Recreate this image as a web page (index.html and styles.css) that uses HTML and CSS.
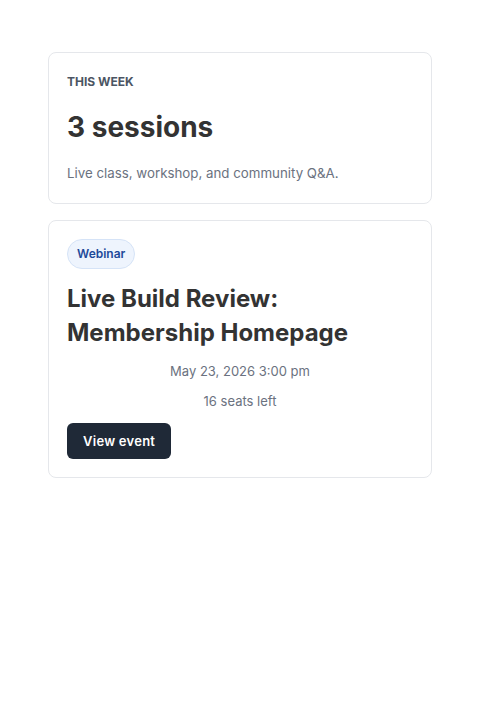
FILE: index.html
```html
<!DOCTYPE html>
<html lang="en">
<head>
<meta charset="UTF-8">
<meta name="viewport" content="width=device-width, initial-scale=1.0">
<title>This week</title>
<link rel="stylesheet" href="styles.css">
</head>
<body>

<div class="content">
    <section class="card summary">
        <div class="eyebrow">THIS WEEK</div>
        <h2 class="count">3 sessions</h2>
        <p class="summary-text">Live class, workshop, and community Q&amp;A.</p>
    </section>

    <section class="card event">
        <span class="badge">Webinar</span>
        <h3 class="event-title">Live Build Review: Membership Homepage</h3>
        <div class="event-meta">
            <div class="event-date">May 23, 2026 3:00 pm</div>
            <div class="event-seats">16 seats left</div>
        </div>
        <button class="btn">View event</button>
    </section>
</div>

</body>
</html>
```

FILE: styles.css
```css
body {
    margin: 0;
    background-color: #fff;
    color: #333;
    font-family: Inter, "Noto Sans", sans-serif;
}
.content {
    width: 384px;
    margin: 52px auto 0;
    display: flex;
    flex-direction: column;
    gap: 16px;
}
.card {
    border: 1px solid #e5e7eb;
    border-radius: 8px;
    padding: 18px;
    background: #fff;
}
.summary {
    padding-bottom: 20px;
}
.eyebrow {
    font-size: 12px;
    font-weight: 700;
    color: #4b5563;
    line-height: 20px;
    margin-top: 1px;
}
.count {
    margin: 17px 0 0;
    font-size: 28px;
    font-weight: 700;
    line-height: 36px;
}
.summary-text {
    margin: 18px 0 0;
    font-size: 13.3px;
    line-height: 20px;
    color: #6b7280;
}
.event {
    display: flex;
    flex-direction: column;
    align-items: flex-start;
}
.badge {
    display: inline-block;
    padding: 0 9px;
    height: 28px;
    line-height: 28px;
    font-size: 12px;
    font-weight: 600;
    color: #1e4a9a;
    background: #eef4fd;
    border: 1px solid #d5e3f7;
    border-radius: 999px;
}
.event-title {
    margin: 13px 0 0;
    font-size: 24px;
    font-weight: 700;
    line-height: 34px;
}
.event-meta {
    align-self: stretch;
    text-align: center;
    margin-top: 11px;
    font-size: 13px;
    line-height: 20px;
    color: #6b7280;
}
.event-seats {
    margin-top: 10px;
}
.btn {
    margin-top: 12px;
    height: 36px;
    padding: 0 16px;
    border: none;
    border-radius: 6px;
    background: #1f2937;
    color: #fff;
    font-family: inherit;
    font-size: 13px;
    font-weight: 600;
    letter-spacing: 0.02em;
}
```
